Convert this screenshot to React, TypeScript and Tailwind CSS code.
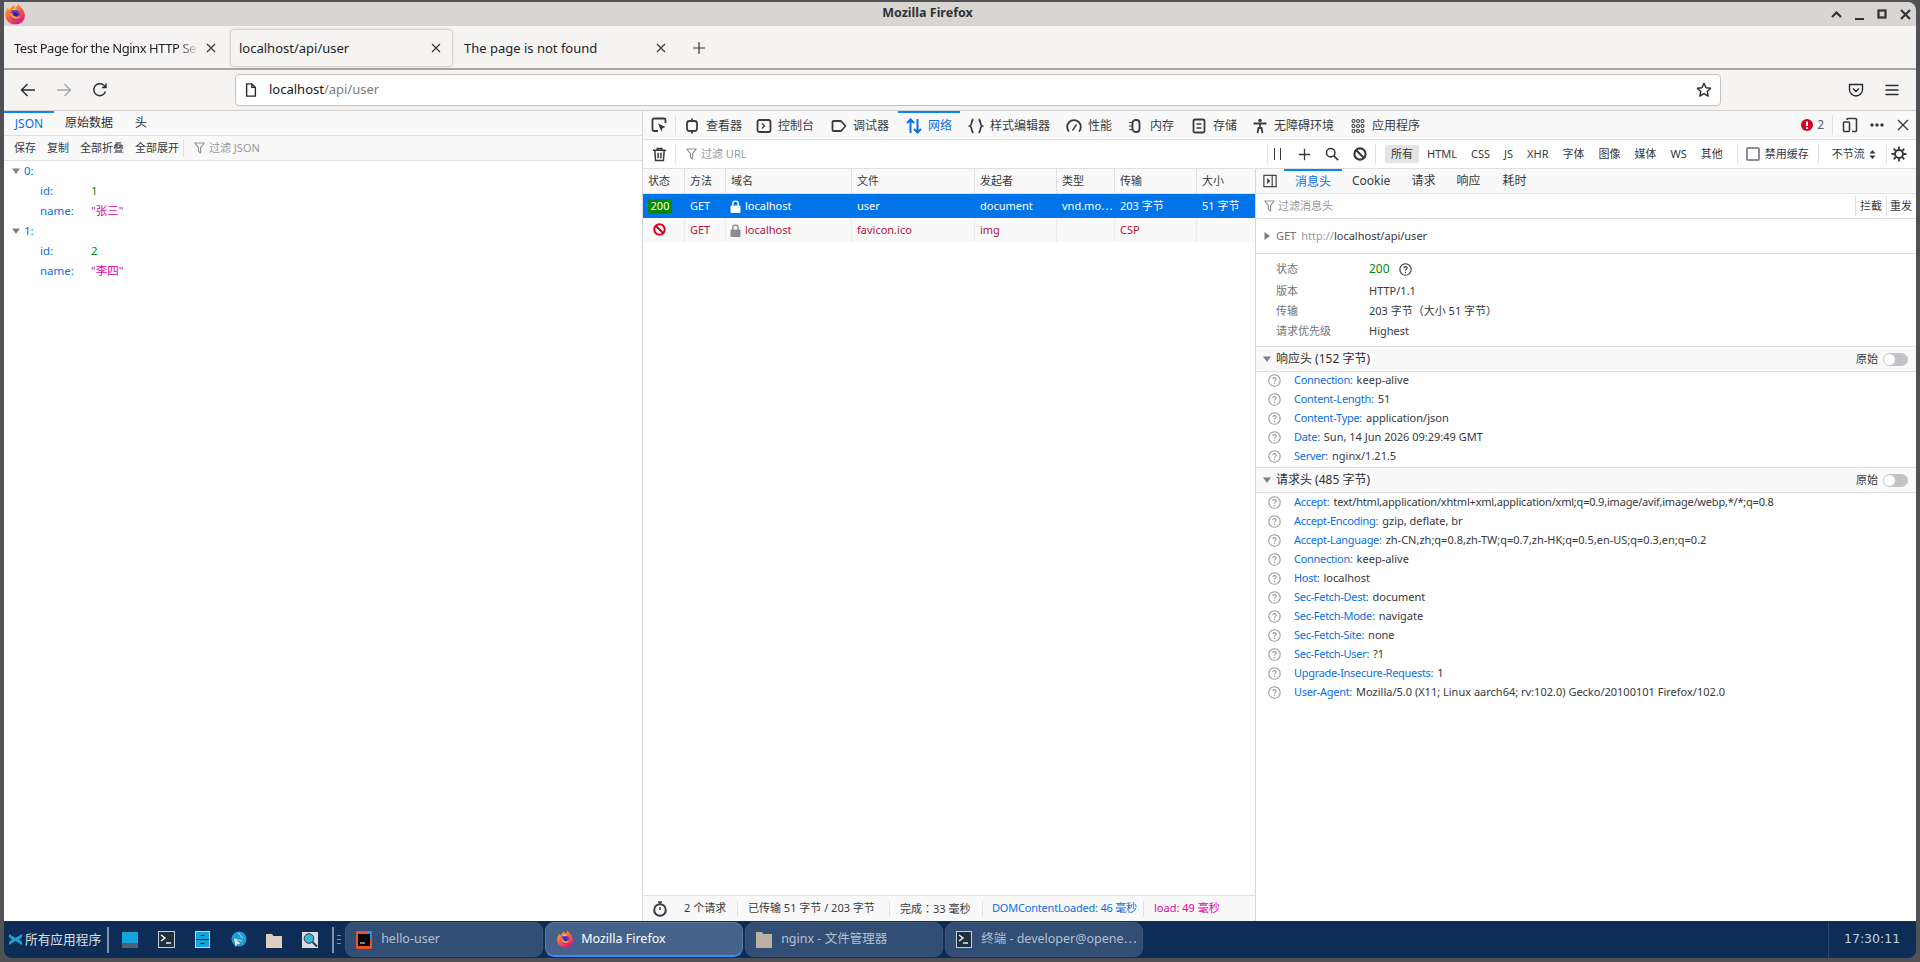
import type { ReactNode } from 'react';

const responseHeaders = [
  ['Connection:', 'keep-alive'],
  ['Content-Length:', '51'],
  ['Content-Type:', 'application/json'],
  ['Date:', 'Sun, 14 Jun 2026 09:29:49 GMT'],
  ['Server:', 'nginx/1.21.5'],
];

const requestHeaders = [
  ['Accept:', 'text/html,application/xhtml+xml,application/xml;q=0.9,image/avif,image/webp,*/*;q=0.8'],
  ['Accept-Encoding:', 'gzip, deflate, br'],
  ['Accept-Language:', 'zh-CN,zh;q=0.8,zh-TW;q=0.7,zh-HK;q=0.5,en-US;q=0.3,en;q=0.2'],
  ['Connection:', 'keep-alive'],
  ['Host:', 'localhost'],
  ['Sec-Fetch-Dest:', 'document'],
  ['Sec-Fetch-Mode:', 'navigate'],
  ['Sec-Fetch-Site:', 'none'],
  ['Sec-Fetch-User:', '?1'],
  ['Upgrade-Insecure-Requests:', '1'],
  ['User-Agent:', 'Mozilla/5.0 (X11; Linux aarch64; rv:102.0) Gecko/20100101 Firefox/102.0'],
];

const filterTypes = ['HTML', 'CSS', 'JS', 'XHR', '字体', '图像', '媒体', 'WS', '其他'];

function Icon({ size = 16, className = '', children }: { size?: number; className?: string; children: ReactNode }) {
  return (
    <svg width={size} height={size} viewBox="0 0 16 16" fill="none" stroke="currentColor" strokeWidth="1.4" className={`shrink-0 ${className}`}>
      {children}
    </svg>
  );
}

function FirefoxLogo({ size }: { size: number }) {
  return (
    <svg width={size} height={size} viewBox="0 0 32 32" className="shrink-0">
      <defs>
        <linearGradient id="ffBody" x1="0" y1="0" x2="0.6" y2="1">
          <stop offset="0" stopColor="#ffbd2e" />
          <stop offset="0.5" stopColor="#ff6a2b" />
          <stop offset="1" stopColor="#e31587" />
        </linearGradient>
      </defs>
      <path d="M21 1c1 4 4 5 6 8 3 4 4 8 3 12-1 6-7 10-14 10C8 31 2 25 2 17 2 12 4 9 6 6c0 2 1 4 2 4 1-3 4-6 8-7-1 2-1 3 0 4 2-1 4-3 5-6z" fill="url(#ffBody)" />
      <circle cx="16" cy="17" r="7.5" fill="#6e3bd1" />
      <circle cx="16" cy="17" r="4" fill="#3d1f9e" />
      <path d="M8 15c1 6 6 9 11 8 3-1 5-3 5-6-2 3-6 4-9 2-2-1-3-3-2-4l-5 0z" fill="#ff9a2e" />
      <path d="M12 9c3-2 7-1 9 1-3-1-5 0-6 1l-3-2z" fill="#ffd84a" />
    </svg>
  );
}

function HelpGlyph({ className }: { className: string }) {
  return (
    <svg width="13" height="13" viewBox="0 0 13 13" className={`shrink-0 ${className}`}>
      <circle cx="6.5" cy="6.5" r="5.7" fill="none" stroke="currentColor" strokeWidth="1.1" />
      <path d="M4.8 5.2c0-1 .8-1.6 1.7-1.6s1.7.6 1.7 1.5c0 1.2-1.7 1.3-1.7 2.6" fill="none" stroke="currentColor" strokeWidth="1.1" />
      <circle cx="6.5" cy="9.5" r=".7" fill="currentColor" />
    </svg>
  );
}

function FunnelIcon() {
  return (
    <svg width="11" height="12" viewBox="0 0 11 12" className="shrink-0 text-[#8f8f93]">
      <path d="M.8 1h9.4L6.6 5.6V11L4.4 9.4V5.6z" fill="none" stroke="currentColor" strokeWidth="1.1" strokeLinejoin="round" />
    </svg>
  );
}

function Triangle({ open = true }: { open?: boolean }) {
  return (
    <svg width="10" height="10" viewBox="0 0 10 10" className="shrink-0 text-[#808086]">
      {open ? <path d="M1 2.5h8L5 8z" fill="currentColor" /> : <path d="M2.5 1v8L8 5z" fill="currentColor" />}
    </svg>
  );
}

function LockIcon({ className }: { className: string }) {
  return (
    <svg width="11" height="13" viewBox="0 0 11 13" className={`shrink-0 ${className}`}>
      <path d="M2.8 6V3.8a2.7 2.7 0 0 1 5.4 0V6" fill="none" stroke="currentColor" strokeWidth="1.4" />
      <rect x=".5" y="5.5" width="10" height="7.5" rx="1.2" fill="currentColor" />
    </svg>
  );
}

function BlockIcon({ className, size = 13 }: { className: string; size?: number }) {
  return (
    <svg width={size} height={size} viewBox="0 0 13 13" fill="none" stroke="currentColor" strokeWidth="2" className={`shrink-0 ${className}`}>
      <circle cx="6.5" cy="6.5" r="5.2" />
      <path d="M3 3l7 7" />
    </svg>
  );
}

function Sep({ className = 'h-[20px]' }: { className?: string }) {
  return <div className={`w-px shrink-0 bg-[#e0e0e2] ${className}`} />;
}

function DevTab({ width, icon, label, active }: { width: string; icon: ReactNode; label: string; active?: boolean }) {
  return (
    <div className={`${width} flex h-full shrink-0 items-center gap-[6px] border-t-2 pl-[8px] ${active ? 'border-[#0a84ff] text-[#0a6fe0]' : 'border-transparent text-[#3b3b40]'}`}>
      {icon}
      <span className="whitespace-nowrap text-[12px] leading-none">{label}</span>
    </div>
  );
}

function BrowserTab({ title, active, fade }: { title: string; active?: boolean; fade?: boolean }) {
  return (
    <div className={`flex h-[36px] w-[221px] shrink-0 items-center rounded-[4px] pl-[8px] pr-[11px] ${active ? 'bg-[#f5f4f2] shadow-[0_0_3px_rgba(0,0,0,0.35)]' : ''}`}>
      <span
        className={`min-w-0 flex-1 overflow-hidden whitespace-nowrap pt-[2px] text-[13px] text-[#232327] ${fade ? 'tracking-[-0.45px] [mask-image:linear-gradient(to_right,black_88%,transparent)]' : ''}`}
      >
        {title}
      </span>
      <svg width="10" height="10" viewBox="0 0 10 10" className="ml-[6px] shrink-0 text-[#333]" stroke="currentColor" strokeWidth="1.1">
        <path d="M1 1l8 8M9 1l-8 8" />
      </svg>
    </div>
  );
}

function HeaderRows({ rows }: { rows: string[][] }) {
  return (
    <div className="flex flex-col">
      {rows.map(([name, value]) => (
        <div key={name} className="flex h-[19px] items-center pl-[12px] text-[11px]">
          <HelpGlyph className="text-[#9a9a9e]" />
          <span className="ml-[13px] tracking-[-0.3px] text-[#0a6fe0]">{name}</span>
          <span className={`ml-[4px] whitespace-nowrap text-[#38383d] ${name === 'Accept:' ? 'tracking-[-0.2px]' : ''}`}>{value}</span>
        </div>
      ))}
    </div>
  );
}

function SectionTitle({ title }: { title: string }) {
  return (
    <div className="flex h-[26px] shrink-0 items-center border-y border-[#e0e0e2] bg-[#f9f9fa] pl-[6px] pr-[8px]">
      <Triangle />
      <span className="ml-[4px] text-[12px] text-[#2e2e33]">{title}</span>
      <span className="ml-auto text-[11px] text-[#38383d]">原始</span>
      <div className="ml-[5px] flex h-[13px] w-[25px] items-center rounded-full bg-[#c4c4c8] px-[1px]">
        <div className="h-[11px] w-[11px] rounded-full bg-white" />
      </div>
    </div>
  );
}

function TaskButton({ icon, label, active }: { icon: ReactNode; label: string; active?: boolean }) {
  return (
    <div
      className={`flex h-[35px] w-[198px] shrink-0 items-center gap-[9px] rounded-[9px] border px-[10px] text-[12.5px] ${
        active ? 'border-[#5d7aa3] border-b-2 border-b-[#3d8bff] bg-[#45628a] text-white' : 'border-[#3e5a80] bg-[#334e74] text-[#b4c0d0]'
      }`}
    >
      {icon}
      <span className="min-w-0 whitespace-nowrap">{label}</span>
    </div>
  );
}

function PanelIcon({ children }: { children: ReactNode }) {
  return <div className="flex w-[36px] shrink-0 justify-center">{children}</div>;
}

export default function App() {
  return (
    <div className="flex h-[962px] w-[1920px] flex-col overflow-hidden bg-[#515155] pb-[4px] pl-[4px] pr-[4px] pt-[2px] font-['Noto_Sans','Noto_Sans_CJK_SC',sans-serif]">
      {/* title bar */}
      <div className="flex h-[24px] shrink-0 items-center rounded-tr-[8px] bg-[#d9d5d2] pr-[3px]">
        <div className="-mt-[1px] h-[22px] w-[22px]">
          <FirefoxLogo size={22} />
        </div>
        <span className="flex-1 pb-[2px] text-center text-[12.5px] font-bold text-[#2e3436]">Mozilla Firefox</span>
        <div className="flex items-center gap-[8px] text-[#2e3436]">
          <svg width="15" height="15" viewBox="0 0 15 15" fill="none" stroke="currentColor" strokeWidth="2.2"><path d="M3 10l4.5-4.5L12 10" /></svg>
          <svg width="15" height="15" viewBox="0 0 15 15" fill="currentColor"><rect x="3" y="11" width="9" height="2" /></svg>
          <svg width="15" height="15" viewBox="0 0 15 15" fill="none" stroke="currentColor" strokeWidth="2.2"><rect x="3.5" y="3.5" width="7" height="7" /></svg>
          <svg width="15" height="15" viewBox="0 0 15 15" fill="none" stroke="currentColor" strokeWidth="2.2"><path d="M3 3l9 9M12 3l-9 9" /></svg>
        </div>
      </div>

      {/* tab strip */}
      <div className="flex h-[44px] shrink-0 items-start gap-[4px] border-b-2 border-[#a9a7a5] bg-[#f5f4f2] pl-[2px] pt-[4px]">
        <BrowserTab title="Test Page for the Nginx HTTP Se" fade />
        <BrowserTab title="localhost/api/user" active />
        <BrowserTab title="The page is not found" />
        <div className="flex h-[36px] items-center pl-[11px] text-[#333]">
          <svg width="14" height="14" viewBox="0 0 14 14" stroke="currentColor" strokeWidth="1.2"><path d="M7 1v12M1 7h12" /></svg>
        </div>
      </div>

      {/* nav bar */}
      <div className="flex h-[41px] shrink-0 items-center border-b border-[#d3d0cb] bg-[#f5f4f2] pl-[16px] pr-[16px]">
        <Icon className="text-[#2a2a2e]"><path d="M15 8H1.5M7.5 2L1.5 8l6 6" /></Icon>
        <Icon className="ml-[20px] text-[#a8a8aa]"><path d="M1 8h13.5M8.5 2l6 6-6 6" /></Icon>
        <Icon className="ml-[20px] text-[#2a2a2e]"><path d="M13.5 9.500A6 6 0 1 1 11.5 3L14 5.5M14 1.5v4h-4" /></Icon>
        <div className="ml-[127px] flex h-[32px] w-[1486px] shrink-0 items-center rounded-[4px] border border-[#c6c3be] bg-white pl-[8px] pr-[8px]">
          <Icon size={14} className="text-[#2a2a2e]"><path d="M3 1h6l4 4v10H3zM9 1v4h4" strokeWidth="1.6" strokeLinejoin="round" /></Icon>
          <span className="ml-[11px] text-[13px] text-[#15141a]">localhost<span className="text-[#7a7a80]">/api/user</span></span>
          <Icon className="ml-auto text-[#2a2a2e]"><path d="M8 1.3l2 4.4 4.7.5-3.5 3.2 1 4.7L8 11.7l-4.2 2.4 1-4.7L1.3 6.2 6 5.7z" strokeLinejoin="round" /></Icon>
        </div>
        <Icon className="ml-[127px] text-[#2a2a2e]"><path d="M1.5 2.5h13v5a6.5 6.5 0 0 1-13 0zM5 6.5l3 3 3-3" strokeLinejoin="round" /></Icon>
        <Icon className="ml-[20px] text-[#2a2a2e]"><path d="M1.5 3.5h13M1.5 8h13M1.5 12.5h13" /></Icon>
      </div>

      <div className="flex min-h-0 flex-1 bg-white">
        {/* JSON viewer */}
        <div className="flex w-[639px] shrink-0 flex-col border-r border-[#d7d7db]">
          <div className="flex h-[25px] shrink-0 items-stretch border-b border-[#e0e0e2] bg-[#f9f9fa] text-[12px] text-[#2e2e33]">
            <div className="flex w-[50px] items-center justify-center border-t-2 border-[#0a84ff] text-[#0a6fe0]">JSON</div>
            <div className="ml-[11px] flex items-center">原始数据</div>
            <div className="ml-[22px] flex items-center">头</div>
          </div>
          <div className="flex h-[25px] shrink-0 items-center border-b border-[#e0e0e2] bg-[#f9f9fa] pl-[10px] text-[11px] text-[#38383d]">
            <span>保存</span>
            <span className="ml-[11px]">复制</span>
            <span className="ml-[11px]">全部折叠</span>
            <span className="ml-[11px]">全部展开</span>
            <Sep className="ml-[4px] h-[18px]" />
            <div className="ml-[10px] flex items-center gap-[4px] text-[#98989c]">
              <FunnelIcon />
              <span>过滤 JSON</span>
            </div>
          </div>
          <div className="flex flex-col text-[11.5px] text-[#0a6fe0]">
            {[
              ['0:', '1', '"张三"'],
              ['1:', '2', '"李四"'],
            ].map(([key, id, name]) => (
              <div key={key} className="flex flex-col">
                <div className="flex h-[20px] items-center pl-[7px]">
                  <Triangle />
                  <span className="ml-[3px]">{key}</span>
                </div>
                <div className="flex h-[20px] items-center pl-[36px]">
                  <span className="w-[51px]">id:</span>
                  <span className="text-[#058b00]">{id}</span>
                </div>
                <div className="flex h-[20px] items-center pl-[36px]">
                  <span className="w-[51px]">name:</span>
                  <span className="text-[#dd00a9]">{name}</span>
                </div>
              </div>
            ))}
          </div>
        </div>

        {/* devtools */}
        <div className="flex min-w-0 flex-1 flex-col">
          <div className="flex h-[29px] shrink-0 items-center border-b border-[#e0e0e2] bg-[#f9f9fa] text-[#38383d]">
            <div className="flex h-full w-[32px] shrink-0 items-center pl-[8px]">
              <Icon><path d="M7 14H3a1.5 1.5 0 0 1-1.5-1.5V3A1.5 1.5 0 0 1 3 1.5h10A1.5 1.5 0 0 1 14.5 3v3" strokeWidth="1.8" /><path d="M7 6.5l7.5 3.5-3 1.2-1 3.5z" fill="currentColor" stroke="none" /></Icon>
            </div>
            <Sep />
            <DevTab width="w-[72px]" label="查看器" icon={<Icon><rect x="3" y="3" width="10" height="10" rx="2.5" strokeWidth="1.8" /><path d="M8 .5V3M8 13v2.5" strokeWidth="1.8" /></Icon>} />
            <DevTab width="w-[75px]" label="控制台" icon={<Icon><rect x="1.5" y="2" width="13" height="12" rx="2" strokeWidth="1.8" /><path d="M6 5.5L8.5 8 6 10.5" /></Icon>} />
            <DevTab width="w-[75px]" label="调试器" icon={<Icon><path d="M2.5 3h7.5L14.5 8 10 13H2.5A1 1 0 0 1 1.5 12V4a1 1 0 0 1 1-1z" strokeWidth="1.8" strokeLinejoin="round" /></Icon>} />
            <DevTab width="w-[62px]" label="网络" active icon={<Icon><path d="M4.5 15V1.5M1 5L4.5 1.5 8 5M11.500 1v13.5M8 11l3.500 3.5L15 11" strokeWidth="2" /></Icon>} />
            <DevTab width="w-[98px]" label="样式编辑器" icon={<Icon><path d="M5.5 1.5C3 1.5 4.5 7 2 8c2.5 1 1 6.5 3.5 6.5M10.5 1.5C13 1.5 11.5 7 14 8c-2.5 1-1 6.5-3.5 6.5" strokeWidth="1.8" /></Icon>} />
            <DevTab width="w-[62px]" label="性能" icon={<Icon><path d="M3 13.5A6.8 6.8 0 1 1 13 13.5" strokeWidth="1.8" /><path d="M6.5 12.5L10.5 6.5" /></Icon>} />
            <DevTab width="w-[63px]" label="内存" icon={<Icon><rect x="4.5" y="2" width="7" height="12" rx="3" strokeWidth="1.8" /><path d="M1 4.5h3M1 8h3M1 11.5h3" strokeWidth="1" /></Icon>} />
            <DevTab width="w-[61px]" label="存储" icon={<Icon><rect x="2.5" y="1.5" width="11" height="13" rx="1.5" strokeWidth="1.8" /><path d="M5.5 6h5M5.5 10h5" /></Icon>} />
            <DevTab width="w-[98px]" label="无障碍环境" icon={<Icon><circle cx="8" cy="2.5" r="1.8" fill="currentColor" stroke="none" /><path d="M1.5 5.5h13M8 5.5v5M5.5 15l1-5h3l1 5" strokeWidth="1.8" /></Icon>} />
            <DevTab width="w-[120px]" label="应用程序" icon={<Icon><g strokeWidth="1.1"><circle cx="3.5" cy="3" r="1.5" /><circle cx="8" cy="3" r="1.5" /><circle cx="12.5" cy="3" r="1.5" /><circle cx="3.5" cy="8" r="1.5" /><circle cx="8" cy="8" r="1.5" /><circle cx="12.5" cy="8" r="1.5" /><circle cx="3.5" cy="13" r="1.5" /><circle cx="8" cy="13" r="1.5" /><circle cx="12.5" cy="13" r="1.5" /></g></Icon>} />
            <div className="ml-auto flex items-center pr-[7px]">
              <svg width="12" height="12" viewBox="0 0 12 12"><circle cx="6" cy="6" r="6" fill="#d70022" /><rect x="5" y="2.5" width="2" height="4.5" fill="#fff" /><rect x="5" y="8" width="2" height="2" fill="#fff" /></svg>
              <span className="ml-[4px] text-[12px] text-[#5a5a60]">2</span>
              <Sep className="ml-[8px] h-[20px]" />
              <Icon className="ml-[9px]"><rect x="1.5" y="5" width="6" height="9.5" rx="1" strokeWidth="1.6" /><path d="M5 3V2.5a1 1 0 0 1 1-1h7.500a1 1 0 0 1 1 1v11a1 1 0 0 1-1 1H10" strokeWidth="1.6" /></Icon>
              <svg width="14" height="4" viewBox="0 0 14 4" className="ml-[12px]" fill="currentColor"><circle cx="2" cy="2" r="1.7" /><circle cx="7" cy="2" r="1.7" /><circle cx="12" cy="2" r="1.7" /></svg>
              <svg width="12" height="12" viewBox="0 0 12 12" className="ml-[13px]" stroke="currentColor" strokeWidth="1.3"><path d="M1 1l10 10M11 1L1 11" /></svg>
            </div>
          </div>

          <div className="flex h-[29px] shrink-0 items-center whitespace-nowrap border-b border-[#e0e0e2] bg-white text-[11px] text-[#38383d]">
            <div className="flex w-[32px] shrink-0 pl-[9px]">
              <Icon size={15}><path d="M1 3.5h14M5.5 3.5V1.5h5v2M3 3.5l.8 11h8.400l.8-11M6.5 6v6M9.500 6v6" strokeWidth="1.6" /></Icon>
            </div>
            <Sep />
            <div className="ml-[10px] flex w-[581px] shrink-0 items-center gap-[4px] text-[#98989c]">
              <FunnelIcon />
              <span>过滤 URL</span>
            </div>
            <Sep />
            <div className="ml-[6px] flex h-[12px] w-[7px] shrink-0 justify-between">
              <div className="h-full w-px bg-[#38383d]" />
              <div className="h-full w-px bg-[#38383d]" />
            </div>
            <Icon size={13} className="ml-[17px]"><path d="M8 1v14M1 8h14" strokeWidth="1.6" /></Icon>
            <Icon size={14} className="ml-[14px]"><circle cx="6.5" cy="6.5" r="4.8" strokeWidth="1.8" /><path d="M10 10l5 5" strokeWidth="2" /></Icon>
            <BlockIcon size={14} className="ml-[14px] text-[#38383d]" />
            <Sep className="ml-[8px] h-[20px]" />
            <div className="ml-[9px] flex h-[18px] w-[34px] shrink-0 items-center justify-center rounded-[2px] bg-[#e3e3e4]">所有</div>
            <div className="ml-[8px] flex shrink-0 items-center gap-[14px]">
              {filterTypes.map((t) => (
                <span key={t}>{t}</span>
              ))}
            </div>
            <Sep className="ml-[14px] h-[20px]" />
            <div className="ml-[8px] h-[14px] w-[14px] shrink-0 rounded-[2px] border-2 border-[#8d8d96] bg-white" />
            <span className="ml-[5px]">禁用缓存</span>
            <Sep className="ml-[9px] h-[20px]" />
            <span className="ml-[13px]">不节流</span>
            <svg width="7" height="11" viewBox="0 0 7 11" className="ml-[4px] shrink-0" fill="currentColor"><path d="M3.5 1L6.5 4.5h-6zM3.5 10L6.5 6.5h-6z" /></svg>
            <Sep className="ml-[10px] h-[20px]" />
            <Icon size={16} className="ml-auto mr-[9px]"><circle cx="8" cy="8" r="4" strokeWidth="2" /><path d="M8 .5v3M8 12.5v3M.5 8h3M12.5 8h3M2.7 2.7l2.1 2.1M11.2 11.2l2.1 2.1M13.3 2.7l-2.1 2.1M4.8 11.2l-2.1 2.1" strokeWidth="1.8" /></Icon>
          </div>

          <div className="flex min-h-0 flex-1">
            {/* request list */}
            <div className="flex w-[613px] shrink-0 flex-col border-r border-[#d7d7db]">
              <div className="grid h-[25px] shrink-0 grid-cols-[42px_41px_126px_123px_82px_58px_82px_1fr] border-b border-[#e0e0e2] bg-[#f9f9fa] text-[11px] text-[#38383d]">
                {['状态', '方法', '域名', '文件', '发起者', '类型', '传输', '大小'].map((h) => (
                  <div key={h} className="flex items-center border-r border-[#e0e0e2] pl-[5px] last:border-r-0">{h}</div>
                ))}
              </div>
              <div className="grid h-[24px] shrink-0 grid-cols-[42px_41px_126px_123px_82px_58px_82px_1fr] items-center bg-[#0074e8] text-[11px] text-white">
                <div className="pl-[5px]"><span className="flex h-[15px] w-[24px] items-center justify-center rounded-[3px] bg-[#058b00]">200</span></div>
                <div className="pl-[5px]">GET</div>
                <div className="flex items-center pl-[4px]"><LockIcon className="text-white" /><span className="ml-[4px]">localhost</span></div>
                <div className="pl-[5px]">user</div>
                <div className="pl-[5px]">document</div>
                <div className="pl-[5px]">vnd.mo⋯</div>
                <div className="pl-[5px]">203 字节</div>
                <div className="pl-[5px]">51 字节</div>
              </div>
              <div className="grid h-[24px] shrink-0 grid-cols-[42px_41px_126px_123px_82px_58px_82px_1fr] items-center bg-[#f9f9fa] text-[11px] text-[#b3123c]">
                <div className="h-full border-r border-[#ececee] pl-[10px] pt-[5px]"><BlockIcon className="text-[#d70022]" /></div>
                <div className="flex h-full items-center border-r border-[#ececee] pl-[5px]">GET</div>
                <div className="flex h-full items-center border-r border-[#ececee] pl-[4px]"><LockIcon className="text-[#8b8b90]" /><span className="ml-[4px]">localhost</span></div>
                <div className="flex h-full items-center border-r border-[#ececee] pl-[5px]">favicon.ico</div>
                <div className="flex h-full items-center border-r border-[#ececee] pl-[5px]">img</div>
                <div className="h-full border-r border-[#ececee]" />
                <div className="flex h-full items-center border-r border-[#ececee] pl-[5px]">CSP</div>
                <div />
              </div>
              <div className="flex-1" />
              <div className="flex h-[26px] shrink-0 items-center whitespace-nowrap border-t border-[#e0e0e2] bg-[#f9f9fa] text-[11px] text-[#38383d]">
                <Icon size={16} className="ml-[9px]"><circle cx="8" cy="9" r="5.8" strokeWidth="2" /><path d="M6 1h4M8 1v2M8 6v3" strokeWidth="1.5" /></Icon>
                <span className="ml-[16px] w-[53px]">2 个请求</span>
                <Sep className="h-[16px]" />
                <span className="ml-[10px] w-[141px]">已传输 51 字节 / 203 字节</span>
                <Sep className="h-[16px]" />
                <span className="ml-[10px] w-[82px]">完成<span className="font-['Noto_Sans_CJK_TC']">：</span>33 毫秒</span>
                <Sep className="h-[16px]" />
                <span className="ml-[9px] w-[151px] tracking-[-0.2px] text-[#0a6fe0]">DOMContentLoaded: 46 毫秒</span>
                <Sep className="h-[16px]" />
                <span className="ml-[10px] text-[#dd00a9]">load: 49 毫秒</span>
              </div>
            </div>

            {/* sidebar */}
            <div className="flex min-w-0 flex-1 flex-col overflow-hidden">
              <div className="flex h-[25px] shrink-0 items-center border-b border-[#e0e0e2] bg-[#f9f9fa] text-[12px] text-[#38383d]">
                <Icon size={14} className="ml-[7px]"><rect x="1" y="1.5" width="14" height="13" strokeWidth="1.3" /><path d="M10.5 1.5v13" strokeWidth="1.3" /><path d="M5 5l3 3-3 3z" fill="currentColor" strokeWidth=".5" /></Icon>
                <div className="ml-[7px] flex h-full w-[58px] items-center justify-center border-t-2 border-[#0a84ff] text-[#0a6fe0]">消息头</div>
                <span className="ml-[10px]">Cookie</span>
                <span className="ml-[21px]">请求</span>
                <span className="ml-[21px]">响应</span>
                <span className="ml-[22px]">耗时</span>
              </div>
              <div className="flex h-[25px] shrink-0 items-center border-b border-[#e0e0e2] pl-[8px] text-[11px] text-[#98989c]">
                <FunnelIcon />
                <span className="ml-[3px]">过滤消息头</span>
                <div className="ml-auto flex h-[20px] items-center border-l border-[#e0e0e2] pl-[4px] text-[#38383d]">拦截</div>
                <div className="ml-[4px] flex h-[20px] items-center border-l border-[#e0e0e2] pl-[3px] pr-[4px] text-[#38383d]">重发</div>
              </div>
              <div className="flex h-[35px] shrink-0 items-center border-b border-[#e0e0e2] pl-[6px] text-[11px] text-[#737378]">
                <Triangle open={false} />
                <span className="ml-[4px]">GET</span>
                <span className="ml-[5px] text-[#9a9a9e]">http://</span>
                <span className="text-[#38383d]">localhost/api/user</span>
              </div>
              <div className="flex h-[92px] shrink-0 flex-col pl-[20px] pt-[5px] text-[11px] text-[#38383d]">
                <div className="mb-[2px] flex h-[20px] items-center">
                  <span className="w-[93px] text-[#737378]">状态</span>
                  <span className="text-[12px] text-[#058b00]">200</span>
                  <HelpGlyph className="ml-[9px] text-[#38383d]" />
                </div>
                <div className="flex h-[20px] items-center"><span className="w-[93px] text-[#737378]">版本</span>HTTP/1.1</div>
                <div className="flex h-[20px] items-center"><span className="w-[93px] text-[#737378]">传输</span>203 字节（大小 51 字节）</div>
                <div className="flex h-[20px] items-center"><span className="w-[93px] text-[#737378]">请求优先级</span>Highest</div>
              </div>
              <SectionTitle title="响应头 (152 字节)" />
              <div className="-mt-[1px] pb-[1px]"><HeaderRows rows={responseHeaders} /></div>
              <SectionTitle title="请求头 (485 字节)" />
              <HeaderRows rows={requestHeaders} />
            </div>
          </div>
        </div>
      </div>

      {/* panel */}
      <div className="flex h-[37px] shrink-0 items-center rounded-b-[8px] bg-[#0d2c56] text-[13px]">
        <svg width="15" height="15" viewBox="0 0 15 15" className="ml-[4px] shrink-0">
          <path d="M1 2l6.5 4L14 2v3l-3 2.5L14 10v3L7.5 9 1 13v-3l3-2.5L1 5z" fill="#1aa4da" />
        </svg>
        <span className="ml-[2px] whitespace-nowrap text-[12.7px] text-[#d9e0ea]">所有应用程序</span>
        <div className="ml-[6px] h-[26px] w-[2px] shrink-0 bg-[#8092ab]" />
        <div className="ml-[3px] flex items-center">
          <PanelIcon><svg width="16" height="16" viewBox="0 0 16 16"><rect width="16" height="11" fill="#14a3db" /><rect y="11" width="16" height="5" fill="#4d6170" /></svg></PanelIcon>
          <PanelIcon><svg width="17" height="17" viewBox="0 0 17 17"><rect x=".5" y=".5" width="16" height="16" fill="#20303c" stroke="#c7d0d6" /><path d="M3 4l4 3-4 3" stroke="#fff" fill="none" strokeWidth="1.4" /><path d="M8 12h5" stroke="#fff" strokeWidth="1.4" /></svg></PanelIcon>
          <PanelIcon><svg width="15" height="17" viewBox="0 0 15 17"><rect x=".5" y=".5" width="14" height="16" fill="#14a3db" stroke="#b9d7e6" /><path d="M1 8.5h13M5.5 4.5h4M5.5 12.5h4" stroke="#0d2c56" /></svg></PanelIcon>
          <PanelIcon><svg width="17" height="17" viewBox="0 0 17 17"><circle cx="9" cy="8" r="7.5" fill="#1c9fd0" /><path d="M8 2c3 1 2 4 5 5M5 8l7 2" stroke="#bfe3f2" fill="none" /><path d="M4 7l1.5 9 2-3 3-.5z" fill="#e8e8e8" /></svg></PanelIcon>
          <PanelIcon><svg width="16" height="16" viewBox="0 0 16 16"><path d="M0 2h6l1.5 2H16v12H0z" fill="#dccfc2" /></svg></PanelIcon>
          <PanelIcon><svg width="16" height="16" viewBox="0 0 16 16"><rect width="16" height="16" fill="#d9dde0" /><circle cx="7" cy="6.500" r="4.8" fill="#3fb4dc" stroke="#2d3b45" /><path d="M10.5 10l4.500 4.500" stroke="#2d3b45" strokeWidth="2" /></svg></PanelIcon>
        </div>
        <div className="ml-[4px] h-[26px] w-[2px] shrink-0 bg-[#8092ab]" />
        <div className="ml-[3px] mr-[4px] flex h-[9px] w-[4px] shrink-0 flex-col justify-between">
          <div className="h-px bg-[#8092ab]" /><div className="h-px bg-[#8092ab]" /><div className="h-px bg-[#8092ab]" />
        </div>
        <div className="flex items-center gap-[2px]">
          <TaskButton label="hello-user" icon={<svg width="16" height="18" viewBox="0 0 16 18" className="shrink-0"><rect width="16" height="18" fill="#e8532d" /><path d="M16 0v10L10 0z" fill="#1f8fe6" /><rect x="2" y="3" width="12" height="12" fill="#000" /><path d="M4 12h5" stroke="#fff" /></svg>} />
          <TaskButton active label="Mozilla Firefox" icon={<div className="-mr-[2px]"><FirefoxLogo size={18} /></div>} />
          <TaskButton label="nginx - 文件管理器" icon={<svg width="16" height="17" viewBox="0 0 16 17" className="shrink-0"><path d="M0 1h6l1.5 2H16v14H0z" fill="#bdb1a6" /></svg>} />
          <TaskButton label="终端 - developer@opene⋯" icon={<svg width="16" height="17" viewBox="0 0 16 17" className="shrink-0"><rect x=".5" y=".5" width="15" height="16" fill="#20303c" stroke="#c7d0d6" /><path d="M3 4l4 3-4 3" stroke="#fff" fill="none" strokeWidth="1.3" /><path d="M7 12h5" stroke="#fff" strokeWidth="1.3" /></svg>} />
        </div>
        <div className="ml-auto flex h-full w-[88px] items-center border-l border-[#2b4568] pl-[15px] font-['DejaVu_Sans',sans-serif] text-[12.5px] text-[#c2cfe0]">17:30:11</div>
      </div>
    </div>
  );
}
